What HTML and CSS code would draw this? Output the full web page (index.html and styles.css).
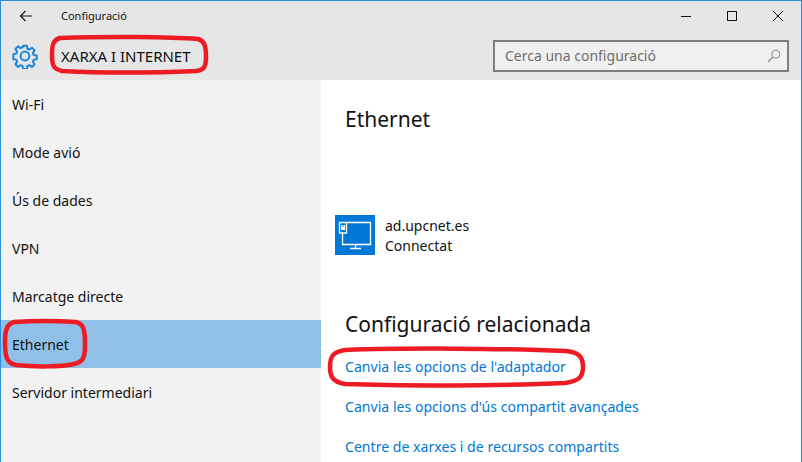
FILE: index.html
```html
<!DOCTYPE html>
<html lang="ca">
<head>
    <meta charset="UTF-8">
    <title>Configuració</title>
    <link rel="stylesheet" href="styles.css">
</head>
<body>

<div class="window">

    <!-- Barra de titol -->
    <div class="titlebar">
        <svg class="back" width="14" height="12" viewBox="0 0 14 12">
            <path d="M13 6H1.5M6.5 1L1.5 6L6.5 11" fill="none" stroke="#111" stroke-width="1.1"/>
        </svg>
        <span class="apptitle">Configuració</span>
        <div class="winbtns">
            <svg class="winbtn" width="46" height="32" viewBox="0 0 46 32">
                <path d="M18 16.5H28" stroke="#111" stroke-width="1"/>
            </svg>
            <svg class="winbtn" width="46" height="32" viewBox="0 0 46 32">
                <rect x="18.5" y="11.5" width="9" height="9" fill="none" stroke="#111" stroke-width="1"/>
            </svg>
            <svg class="winbtn" width="46" height="32" viewBox="0 0 46 32">
                <path d="M18 11L28 21M28 11L18 21" stroke="#111" stroke-width="1"/>
            </svg>
        </div>
    </div>

    <!-- Capcalera -->
    <div class="header">
        <svg class="gear" width="26" height="26" viewBox="0 0 26 26">
            <path d="M10.9 1.5h4.2l.6 3.4 2.2.9 2.8-2 3 3-2 2.8.9 2.2 3.4.6v4.2l-3.4.6-.9 2.2 2 2.8-3 3-2.8-2-2.2.9-.6 3.4h-4.2l-.6-3.4-2.2-.9-2.8 2-3-3 2-2.8-.9-2.2-3.4-.6V10.9l3.4-.6.9-2.2-2-2.8 3-3 2.8 2 2.2-.9z" transform="translate(1.3 1.3) scale(.9)" fill="none" stroke="#1a86dc" stroke-width="2.2" stroke-linejoin="round"/>
            <circle cx="13" cy="13" r="4.4" fill="none" stroke="#1a86dc" stroke-width="2"/>
        </svg>
        <span class="section">XARXA I INTERNET</span>
        <div class="search">
            <span>Cerca una configuració</span>
            <svg width="14" height="14" viewBox="0 0 14 14">
                <circle cx="8.8" cy="5.2" r="4" fill="none" stroke="#8a8a8a" stroke-width="1"/>
                <path d="M6 8L1 13" stroke="#8a8a8a" stroke-width="1.2"/>
            </svg>
        </div>
    </div>

    <div class="main">
        <div class="sidebar">
            <div class="navitem">Wi-Fi</div>
            <div class="navitem">Mode avió</div>
            <div class="navitem">Ús de dades</div>
            <div class="navitem">VPN</div>
            <div class="navitem">Marcatge directe</div>
            <div class="navitem selected">Ethernet</div>
            <div class="navitem">Servidor intermediari</div>
        </div>

        <div class="content">
            <h1>Ethernet</h1>

            <div class="network">
                <div class="neticon">
                    <svg width="40" height="40" viewBox="0 0 40 40">
                        <path d="M11.5 7.5H35.5V29.5H7.5V18M20.5 29.5V33M15 33.5H26" fill="none" stroke="#fff" stroke-width="1.3"/>
                        <path d="M4.5 7.5H11.5V18H4.5z" fill="none" stroke="#fff" stroke-width="1.3"/>
                        <path d="M6 10H10V15H6z" fill="#fff"/>
                        <rect x="7.5" y="10" width="1" height="2" fill="#0078d7"/>
                    </svg>
                </div>
                <div class="netinfo">
                    <div>ad.upcnet.es</div>
                    <div>Connectat</div>
                </div>
            </div>

            <h2>Configuració relacionada</h2>
            <div class="links">
                <a class="link" href="#">Canvia les opcions de l'adaptador</a>
                <a class="link" href="#">Canvia les opcions d'ús compartit avançades</a>
                <a class="link" href="#">Centre de xarxes i de recursos compartits</a>
            </div>
        </div>
    </div>

    <!-- Marques vermelles fetes a ma sobre la captura -->
    <svg class="marks" width="802" height="462" viewBox="0 0 802 462">
        <path d="M60 38C110 36 170 37 198 39C205 41 206 47 206 57C206 67 204 70 196 71C150 73 100 73 62 71C53 69 52 65 52 55C52 45 53 40 60 38Z"/>
        <path d="M14 322C30 321 60 321 76 322C84 324 85 330 85 345C85 358 83 362 74 364C60 367 35 367 16 365C7 363 5 358 5 342C5 330 7 324 14 322Z"/>
        <path d="M345 350C400 348 500 348 565 351C578 352 583 356 583 367C583 378 578 381 565 383C500 386 400 386 345 384C333 382 330 377 330 367C330 356 333 352 345 350Z"/>
    </svg>
</div>

</body>
</html>
```

FILE: styles.css
```css
* {
    box-sizing: border-box;
}

html, body {
    margin: 0;
    height: 100%;
    overflow: hidden;
}

body {
    font-family: "Noto Sans", "Open Sans", sans-serif;
    color: #111;
    background: #fff;
}

.window {
    position: relative;
    width: 802px;
    height: 462px;
    border: 1px solid #2b90d9;
    border-bottom: none;
    overflow: hidden;
    display: flex;
    flex-direction: column;
}

.titlebar {
    height: 31px;
    flex: none;
    background: #e6e6e6;
    display: flex;
    align-items: center;
    padding-left: 18px;
    padding-bottom: 2px;
}

.back {
    flex: none;
}

.apptitle {
    margin-left: 28px;
    font-size: 11px;
}

.winbtns {
    margin-left: auto;
    display: flex;
}

.winbtn {
    display: block;
}

.header {
    height: 48px;
    flex: none;
    background: #e6e6e6;
    display: flex;
    align-items: center;
    padding-left: 11px;
}

.section {
    margin-left: 23px;
    font-size: 15px;
}

.search {
    margin-left: auto;
    margin-right: 12px;
    width: 296px;
    height: 32px;
    margin-bottom: 1px;
    border: 2px solid #7f7f7f;
    background: #f0f0f0;
    display: flex;
    align-items: center;
    justify-content: space-between;
    padding: 0 6px 0 10px;
    font-size: 14px;
    color: #6d6d6d;
}

.main {
    flex: 1;
    display: flex;
    min-height: 0;
}

.sidebar {
    width: 320px;
    flex: none;
    background: #f2f2f2;
}

.navitem {
    height: 48px;
    display: flex;
    align-items: center;
    padding-left: 11px;
    font-size: 14px;
}

.selected {
    background: #90c0e8;
}

.content {
    flex: 1;
    padding: 0 24px;
}

h1 {
    margin: 23px 0 0 0;
    height: 32px;
    font-size: 21px;
    line-height: 32px;
    font-weight: 400;
}

.network {
    margin: 80px 0 0 -10px;
    display: flex;
    align-items: center;
    height: 40px;
}

.neticon {
    width: 40px;
    height: 40px;
    background: #0078d7;
    flex: none;
}

.neticon svg {
    display: block;
}

.netinfo {
    margin-left: 10px;
    padding-top: 2px;
    font-size: 14px;
    line-height: 20px;
}

h2 {
    margin: 53px 0 0 0;
    height: 32px;
    font-size: 21px;
    line-height: 32px;
    font-weight: 400;
}

.links {
    margin-top: 7px;
}

.link {
    display: block;
    height: 40px;
    line-height: 40px;
    font-size: 14.1px;
    color: #0078d7;
    text-decoration: none;
}

.marks {
    position: absolute;
    left: -1px;
    top: -1px;
    pointer-events: none;
}

.marks path {
    fill: none;
    stroke: #ed1c24;
    stroke-width: 4.5;
}
```
